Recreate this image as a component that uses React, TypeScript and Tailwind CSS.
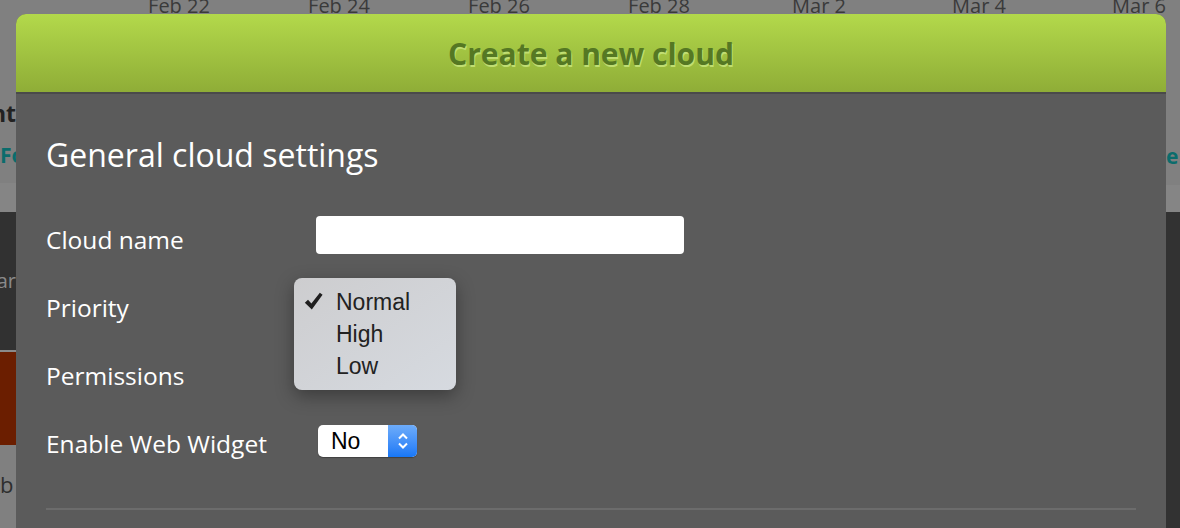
import React from "react";

const dates = ["Feb 22", "Feb 24", "Feb 26", "Feb 28", "Mar 2", "Mar 4", "Mar 6"];

function Background() {
  return (
    <div className="flex h-[528px] w-[1180px] flex-col bg-[#808080]" style={{ fontFamily: "'Open Sans', sans-serif" }}>
      <div className="relative h-[14px] overflow-hidden">
        <div className="-mt-[7px] flex pl-[99px]">
          {dates.map((d) => (
            <div key={d} className="w-[160px] shrink-0 text-center text-[20px] leading-[26px] text-[#3a3a3a]">
              {d}
            </div>
          ))}
        </div>
      </div>
      <div className="flex flex-1">
        <div className="flex w-[16px] flex-col overflow-hidden">
          <div className="h-[169px] overflow-hidden">
            <div className="mt-[84px] flex justify-end text-[23px] font-bold leading-[30px] text-[#222]">nt</div>
            <div className="mt-[13px] whitespace-nowrap text-[21px] font-bold leading-[28px] text-[#0b6c6c]">Fo</div>
          </div>
          <div className="h-[29px] bg-[#858585]" />
          <div className="flex h-[138px] items-center justify-end overflow-hidden bg-[#313131]">
            <span className="text-[20px] leading-[28px] text-[#8a8a8a]">ar</span>
          </div>
          <div className="h-[2px] bg-[#8a8a8a]" />
          <div className="h-[93px] bg-[#6b1e00]" />
          <div className="flex-1 overflow-hidden">
            <div className="mt-[24px] text-[22px] leading-[30px] text-[#2e2e2e]">b</div>
          </div>
        </div>
        <div className="flex-1" />
        <div className="flex w-[14px] flex-col overflow-hidden">
          <div className="h-[171px] overflow-hidden">
            <div className="mt-[128px] whitespace-nowrap text-[21px] font-bold leading-[28px] text-[#0b6c6c]">e</div>
          </div>
          <div className="h-[27px] bg-[#858585]" />
          <div className="flex-1 bg-[#323232]" />
        </div>
      </div>
    </div>
  );
}

function Check() {
  return (
    <svg width="19" height="19" viewBox="0 0 18 18" className="absolute left-[10px] top-[14px]">
      <path d="M0.8 10.2 L3.8 7.4 L7 11 L15 0.8 L17.6 2.6 L7.4 16.6 Z" fill="#1f1f1f" />
    </svg>
  );
}

export default function App() {
  return (
    <div className="relative h-[528px] w-[1180px] overflow-hidden">
      <Background />
      <div
        className="absolute left-[16px] top-[14px] flex h-[540px] w-[1150px] flex-col overflow-hidden rounded-t-[10px] bg-[#5b5b5b]"
        style={{ fontFamily: "'Open Sans', sans-serif" }}
      >
        <div className="flex h-[78px] items-center justify-center bg-gradient-to-b from-[#b3d94b] to-[#8fad37]">
          <h1 className="text-[30px] font-bold text-[#557823] [text-shadow:1px_2px_0_#c0de72]">Create a new cloud</h1>
        </div>
        <div className="h-[2px] bg-[#4a4a4a]" />
        <div className="relative flex flex-col px-[30px] pt-[41px]">
          <h2 className="text-[32px] leading-[40px] text-white">General cloud settings</h2>
          <div className="mt-[31px] flex flex-col">
            <div className="flex h-[68px] items-center">
              <div className="w-[270px] text-[24.5px] text-white">Cloud name</div>
              <div className="mb-[10px] h-[38px] w-[368px] rounded-[4px] bg-white" />
            </div>
            <div className="flex h-[68px] items-center">
              <div className="w-[270px] text-[24.5px] text-white">Priority</div>
            </div>
            <div className="flex h-[68px] items-center">
              <div className="w-[270px] text-[24.5px] text-white">Permissions</div>
            </div>
            <div className="flex h-[68px] items-center">
              <div className="w-[272px] text-[24.5px] text-white">Enable Web Widget</div>
              <div
                className="mb-[6px] flex h-[32px] w-[99px] overflow-hidden rounded-[5px] bg-white shadow-[0_1px_1px_rgba(0,0,0,0.3)]"
                style={{ fontFamily: "'Liberation Sans', Arial, sans-serif" }}
              >
                <div className="flex flex-1 items-center pl-[13px] text-[23px] text-black">No</div>
                <div className="flex w-[29px] items-center justify-center bg-gradient-to-b from-[#6dacfa] to-[#1677f6]">
                  <svg width="12" height="20" viewBox="0 0 12 20">
                    <path d="M2 7.5 L6 3.5 L10 7.5" stroke="white" strokeWidth="2" fill="none" />
                    <path d="M2 12.5 L6 16.5 L10 12.5" stroke="white" strokeWidth="2" fill="none" />
                  </svg>
                </div>
              </div>
            </div>
          </div>
          <div className="mt-[30px] h-[2px] bg-[#6c6c6c]" />
        </div>
      </div>
      <div
        className="absolute left-[294px] top-[278px] flex h-[112px] w-[162px] flex-col rounded-[8px] bg-gradient-to-br from-[#cdcdcf] to-[#d6dae0] py-[8px] shadow-[0_6px_18px_rgba(0,0,0,0.35)]"
        style={{ fontFamily: "'Liberation Sans', Arial, sans-serif" }}
      >
        <Check />
        {["Normal", "High", "Low"].map((t) => (
          <div key={t} className="flex h-[32px] items-center pl-[42px] text-[23px] text-[#222]">
            {t}
          </div>
        ))}
      </div>
    </div>
  );
}
